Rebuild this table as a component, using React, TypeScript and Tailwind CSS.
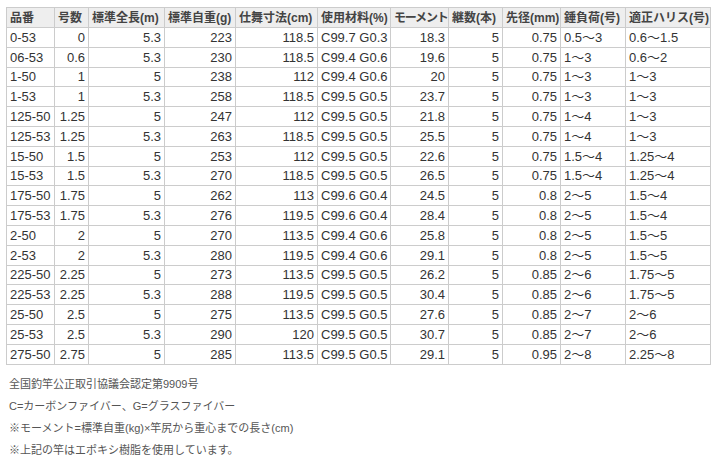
const headers = [
  "品番",
  "号数",
  "標準全長(m)",
  "標準自重(g)",
  "仕舞寸法(cm)",
  "使用材料(%)",
  "モーメント",
  "継数(本)",
  "先径(mm)",
  "錘負荷(号)",
  "適正ハリス(号)",
];

// widths of each column in px
const widths = [48, 34, 76, 71, 82, 73, 58, 54, 58, 65, 85];

const rows = [
  ["0-53", "0", "5.3", "223", "118.5", "C99.7 G0.3", "18.3", "5", "0.75", "0.5～3", "0.6～1.5"],
  ["06-53", "0.6", "5.3", "230", "118.5", "C99.4 G0.6", "19.6", "5", "0.75", "1～3", "0.6～2"],
  ["1-50", "1", "5", "238", "112", "C99.4 G0.6", "20", "5", "0.75", "1～3", "1～3"],
  ["1-53", "1", "5.3", "258", "118.5", "C99.5 G0.5", "23.7", "5", "0.75", "1～3", "1～3"],
  ["125-50", "1.25", "5", "247", "112", "C99.5 G0.5", "21.8", "5", "0.75", "1～4", "1～3"],
  ["125-53", "1.25", "5.3", "263", "118.5", "C99.5 G0.5", "25.5", "5", "0.75", "1～4", "1～3"],
  ["15-50", "1.5", "5", "253", "112", "C99.5 G0.5", "22.6", "5", "0.75", "1.5～4", "1.25～4"],
  ["15-53", "1.5", "5.3", "270", "118.5", "C99.5 G0.5", "26.5", "5", "0.75", "1.5～4", "1.25～4"],
  ["175-50", "1.75", "5", "262", "113", "C99.6 G0.4", "24.5", "5", "0.8", "2～5", "1.5～4"],
  ["175-53", "1.75", "5.3", "276", "119.5", "C99.6 G0.4", "28.4", "5", "0.8", "2～5", "1.5～4"],
  ["2-50", "2", "5", "270", "113.5", "C99.4 G0.6", "25.8", "5", "0.8", "2～5", "1.5～5"],
  ["2-53", "2", "5.3", "280", "119.5", "C99.4 G0.6", "29.1", "5", "0.8", "2～5", "1.5～5"],
  ["225-50", "2.25", "5", "273", "113.5", "C99.5 G0.5", "26.2", "5", "0.85", "2～6", "1.75～5"],
  ["225-53", "2.25", "5.3", "288", "119.5", "C99.5 G0.5", "30.4", "5", "0.85", "2～6", "1.75～5"],
  ["25-50", "2.5", "5", "275", "113.5", "C99.5 G0.5", "27.6", "5", "0.85", "2～7", "2～6"],
  ["25-53", "2.5", "5.3", "290", "120", "C99.5 G0.5", "30.7", "5", "0.85", "2～7", "2～6"],
  ["275-50", "2.75", "5", "285", "113.5", "C99.5 G0.5", "29.1", "5", "0.95", "2～8", "2.25～8"],
];

// text columns (left aligned)
const leftCols = [0, 5, 9, 10];

export default function App() {
  return (
    <div
      className="bg-white w-[720px] h-[464px] overflow-hidden pt-[7px] pl-[6px] text-[#333]"
      style={{ fontFamily: '"Liberation Sans", "Noto Sans CJK JP", sans-serif' }}
    >
      <table className="border-collapse table-fixed w-[704px] text-[13px] leading-none">
        <colgroup>
          {widths.map((w, i) => (
            <col key={i} style={{ width: w }} />
          ))}
        </colgroup>
        <thead>
          <tr className="h-[20px] bg-[#eeeeee]">
            {headers.map((h) => (
              <th
                key={h}
                className={`border border-[#cccccc] px-[3px] text-left font-bold text-[12px] text-[#444] whitespace-nowrap ${
                  h === "モーメント" ? "tracking-[-1.2px]" : ""
                }`}
              >
                {h}
              </th>
            ))}
          </tr>
        </thead>
        <tbody>
          {rows.map((r) => (
            <tr key={r[0]} className="h-[19.8px]">
              {r.map((c, i) => (
                <td
                  key={i}
                  className={`border border-[#cccccc] px-[3px] whitespace-nowrap ${
                    leftCols.includes(i) ? "text-left" : "text-right"
                  }`}
                >
                  {c}
                </td>
              ))}
            </tr>
          ))}
        </tbody>
      </table>

      {/* NOTES */}
      <div className="text-[11px] text-[#555] pl-[3px] mt-[12px] flex flex-col gap-[8px] leading-[14px]">
        <p>全国釣竿公正取引協議会認定第9909号</p>
        <p>C=カーボンファイバー、G=グラスファイバー</p>
        <p>※モーメント=標準自重(kg)×竿尻から重心までの長さ(cm)</p>
        <p>※上記の竿はエポキシ樹脂を使用しています。</p>
      </div>
    </div>
  );
}
